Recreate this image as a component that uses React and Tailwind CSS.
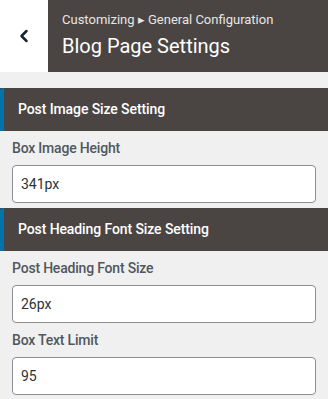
import { ChevronLeft } from "lucide-react";

const SectionBar = ({ title }) => (
    <div className="relative h-[43px] bg-[#4a4543] flex items-center pl-[18px]">
        <span className="absolute left-0 top-0 bottom-0 w-[4px] bg-[#0073aa] rounded-tl-[3px]" />
        <span className="text-[14px] font-medium text-white tracking-[-0.1px]">{title}</span>
    </div>
);

const Field = ({ label, value }) => (
    <div className="px-[12px]">
        <div className="text-[14px] font-medium text-[#50575e] h-[34px] flex items-center tracking-[-0.2px]">
            {label}
        </div>
        <div className="h-[38px] bg-white border border-[#8c8f94] rounded-[4px] flex items-center px-[8px] text-[14px] text-[#2c3338]">
            {value}
        </div>
    </div>
);

export default function App() {
    return (
        <div className="w-[328px] h-[399px] overflow-hidden bg-[#f0f0f0] font-['Roboto',sans-serif]">
            <header className="flex h-[72px]">
                <div className="w-[48px] bg-white flex items-center justify-center">
                    <ChevronLeft size={20} strokeWidth={3} className="text-[#1d2327]" />
                </div>
                <div className="flex-1 bg-[#4a4543] pl-[14px] pt-[11px]">
                    <div className="text-[13px] text-[#e8e6e4] leading-[18px]">
                        Customizing ▸ General Configuration
                    </div>
                    <div className="text-[20px] text-white leading-[28px] mt-[3px]">Blog Page Settings</div>
                </div>
            </header>
            <div className="h-[16px]" />
            <SectionBar title="Post Image Size Setting" />
            <Field label="Box Image Height" value="341px" />
            <div className="h-[5px]" />
            <SectionBar title="Post Heading Font Size Setting" />
            <Field label="Post Heading Font Size" value="26px" />
            <Field label="Box Text Limit" value="95" />
        </div>
    );
}
